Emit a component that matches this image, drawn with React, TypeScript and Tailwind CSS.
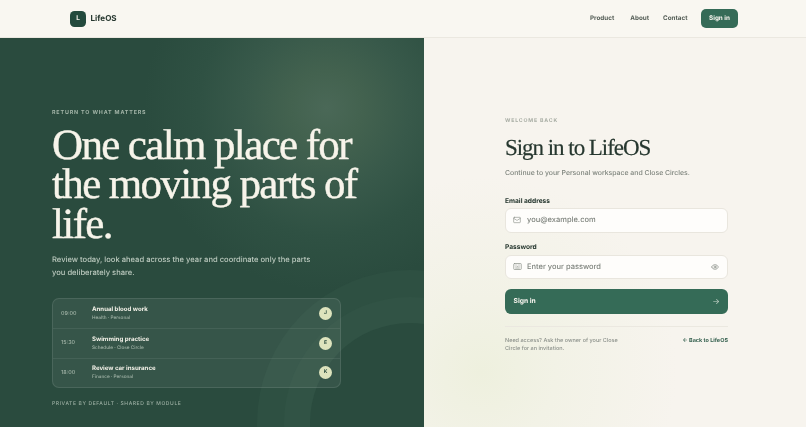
import { Mail, Keyboard, Eye } from "lucide-react";

const rows = [
  { t: "09:00", title: "Annual blood work", sub: "Health · Personal", a: "J" },
  { t: "15:30", title: "Swimming practice", sub: "Schedule · Close Circle", a: "E" },
  { t: "18:00", title: "Review car insurance", sub: "Finance · Personal", a: "K" },
];

const inter = "font-['Inter',sans-serif]";
const serif = "font-['Liberation_Serif',serif]";

export default function App() {
  return (
    <div className={`h-[427px] w-[806px] overflow-hidden flex flex-col bg-[#f7f4ee] [text-rendering:geometricPrecision] blur-[0.25px] ${inter}`}>
      <header className="h-[38px] shrink-0 flex items-center justify-between pl-[70px] pr-[68px] bg-[#f9f7f1] border-b border-[#ebe8e0]">
        <div className="flex items-center gap-[4.5px]">
          <div className="w-4 h-4 rounded-[4.5px] bg-[#234a3d] text-[#f7f4ee] text-[6.5px] font-bold flex items-center justify-center">L</div>
          <span className="text-[8.1px] font-bold text-[#26372f]">LifeOS</span>
        </div>
        <nav className="flex items-center text-[6.3px] font-bold text-[#555e57]">
          <span>Product</span>
          <span className="ml-[16px]">About</span>
          <span className="ml-[14px]">Contact</span>
          <span className="ml-[13.5px] w-[37px] h-[19px] rounded-[5px] bg-[#356b57] text-[#f7f4ee] flex items-center justify-center">Sign in</span>
        </nav>
      </header>
      <main className="flex-1 flex min-h-0">
        <section className="relative w-[424px] shrink-0 overflow-hidden bg-[#2a4b3e] bg-[radial-gradient(circle_at_77%_18%,#4a6857_0%,#43624f_8%,#38594a_18%,#2f5143_28%,#2a4b3e_40%)] pl-[52px] pt-[71px] flex flex-col">
          <div className="absolute left-[310px] top-[285px] w-[200px] h-[200px] rounded-full bg-[#2a4b3e] shadow-[0_0_0_26px_#315345,0_0_0_53px_#2e5042]" />
          <div className="relative">
            <div className="text-[5.35px] leading-[8px] font-bold tracking-[0.16em] text-[#a3b5a8]">RETURN TO WHAT MATTERS</div>
            <h1 className={`${serif} mt-[8.5px] w-[330px] text-[43px] leading-[39.5px] tracking-[-0.038em] text-[#f7f4ea] [-webkit-text-stroke:0.4px_#f7f4ea]`}>One calm place for the moving parts of life.</h1>
            <p className="mt-[8.5px] w-[270px] text-[7.6px] font-medium leading-[13px] text-[#bccabf]">Review today, look ahead across the year and coordinate only the parts you deliberately share.</p>
            <div className="mt-[19.5px] w-[289px] rounded-[7px] border border-white/10 bg-white/[0.06] flex flex-col">
              {rows.map((r, i) => (
                <div key={r.t} className={`h-[29.3px] flex items-center pl-[8px] pr-[8px] ${i ? "border-t border-white/[0.07]" : ""}`}>
                  <span className="w-[31px] text-[5.4px] font-medium text-[#a3b5a8]">{r.t}</span>
                  <div className="flex-1">
                    <div className="text-[6.1px] leading-[9px] font-bold text-[#f3f1e8]">{r.title}</div>
                    <div className="mt-[0.5px] text-[4.7px] leading-[8px] font-medium text-[#a3b5a8]">{r.sub}</div>
                  </div>
                  <div className="w-[13px] h-[13px] rounded-full bg-[#dde3bd] text-[#2a4b3e] text-[5px] font-bold flex items-center justify-center">{r.a}</div>
                </div>
              ))}
            </div>
            <div className="mt-[12px] text-[5px] leading-[8px] font-medium tracking-[0.12em] text-[#9db0a4]">PRIVATE BY DEFAULT · SHARED BY MODULE</div>
          </div>
        </section>
        <section className="flex-1 pl-[81px] pr-[78px] pt-[79px] bg-[radial-gradient(circle_at_15%_86%,#eef0de_0%,#f2f2e6_16%,#f7f4ee_42%)]">
          <div className="text-[5.2px] leading-[8px] font-bold tracking-[0.16em] text-[#a9aea5]">WELCOME BACK</div>
          <h2 className={`${serif} mt-[7.5px] text-[23px] leading-[30px] tracking-[-0.045em] text-[#26372f] [-webkit-text-stroke:0.2px_#26372f]`}>Sign in to LifeOS</h2>
          <p className="mt-[4px] text-[6.9px] font-medium leading-[12px] text-[#7d837c]">Continue to your Personal workspace and Close Circles.</p>
          <label className="block mt-[17px] text-[6.6px] leading-[10px] font-bold text-[#26372f]">Email address</label>
          <div className="mt-[2px] h-[25px] rounded-[6px] border border-[#e9e6de] bg-[#fefdfb] flex items-center pl-[7px] pr-[7px] text-[#7d827c]">
            <Mail size={8} className="text-[#90958e]" />
            <span className="ml-[6px] text-[7.5px] font-medium">you@example.com</span>
          </div>
          <label className="block mt-[9px] text-[6.6px] leading-[10px] font-bold text-[#26372f]">Password</label>
          <div className="mt-[3px] h-[24.5px] rounded-[6px] border border-[#e9e6de] bg-[#fefdfb] flex items-center pl-[7px] pr-[8px] text-[#7d827c]">
            <Keyboard size={9} className="text-[#90958e]" />
            <span className="ml-[5px] text-[7.5px] font-medium">Enter your password</span>
            <Eye size={8} className="ml-auto text-[#7d837c]" />
          </div>
          <div className="mt-[9.5px] h-[25px] rounded-[6px] bg-[#356b57] text-[#f7f4ee] flex items-center justify-between pl-[8.5px] pr-[8px] text-[6.7px] font-bold">
            <span>Sign in</span>
            <span className="text-[8px] font-normal text-[#c9d6cc]">→</span>
          </div>
          <div className="mt-[12px] border-t border-[#ebe8e0] pt-[10px] flex justify-between items-start">
            <p className="w-[118px] text-[5.5px] leading-[8px] font-medium text-[#8c918b]">Need access? Ask the owner of your Close Circle for an invitation.</p>
            <span className="text-[5.5px] leading-[8px] font-bold text-[#35604f]">← Back to LifeOS</span>
          </div>
        </section>
      </main>
    </div>
  );
}
